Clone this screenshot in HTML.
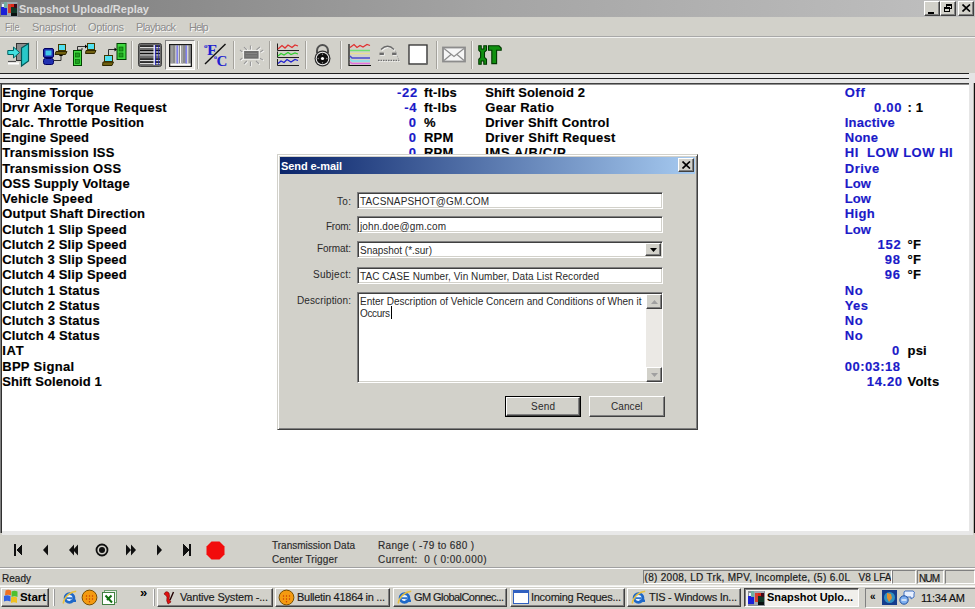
<!DOCTYPE html>
<html><head><meta charset="utf-8"><style>
html,body{margin:0;padding:0;}
body{width:975px;height:609px;overflow:hidden;position:relative;background:#D2D1CA;font-family:'Liberation Sans', sans-serif;}
div{box-sizing:border-box;}
</style></head><body>
<div style="position:absolute;left:0px;top:0px;width:975px;height:17px;background:linear-gradient(90deg,#7c7c7c 0%,#a4a4a4 50%,#c0c0c0 100%);"></div>
<div style="position:absolute;left:19.00px;top:9.19px;height:0;line-height:0;font-size:11px;white-space:pre;color:#DCDCDC;font-weight:bold;letter-spacing:0.020px;">Snapshot Upload/Replay</div>
<svg style="position:absolute;left:0px;top:0px" width="18" height="17" viewBox="0 0 18 17" shape-rendering="crispEdges"><rect x="1" y="2" width="17" height="15" fill="#8a9098"/><rect x="1" y="7" width="6" height="8" fill="#1a20d8"/><rect x="2" y="4" width="3" height="3" fill="#e8f0ff"/><rect x="4" y="2" width="3" height="6" fill="#70b0a0"/><rect x="7" y="2" width="10" height="14" fill="#a0a8b0"/><rect x="8" y="4" width="9" height="3" fill="#e02818"/><rect x="8" y="4" width="3" height="9" fill="#d84030"/><rect x="11" y="7" width="6" height="6" fill="#103828"/><rect x="14" y="4" width="3" height="4" fill="#400818"/><rect x="11" y="13" width="6" height="3" fill="#081010"/></svg>
<div style="position:absolute;left:924px;top:1px;width:16px;height:15px;background:#D2D1CA;border-top:1px solid #fff;border-left:1px solid #fff;border-right:1px solid #404040;border-bottom:1px solid #404040;box-shadow:inset -1px -1px 0 #808080;"><div style="position:absolute;left:3px;top:10px;width:6px;height:2px;background:#000"></div></div>
<div style="position:absolute;left:940px;top:1px;width:16px;height:15px;background:#D2D1CA;border-top:1px solid #fff;border-left:1px solid #fff;border-right:1px solid #404040;border-bottom:1px solid #404040;box-shadow:inset -1px -1px 0 #808080;"><div style="position:absolute;left:5px;top:2px;width:6px;height:5px;border:1px solid #000;border-top-width:2px"></div><div style="position:absolute;left:3px;top:5px;width:6px;height:5px;border:1px solid #000;border-top-width:2px;background:#D2D1CA"></div></div>
<div style="position:absolute;left:958px;top:1px;width:16px;height:15px;background:#D2D1CA;border-top:1px solid #fff;border-left:1px solid #fff;border-right:1px solid #404040;border-bottom:1px solid #404040;box-shadow:inset -1px -1px 0 #808080;"><svg style="position:absolute;left:3px;top:2px" width="9" height="8" viewBox="0 0 9 8"><path d="M0.5 0.5L8 7.5M8 0.5L0.5 7.5" stroke="#000" stroke-width="1.7"/></svg></div>
<div style="position:absolute;left:5.00px;top:27.19px;height:0;line-height:0;font-size:11px;white-space:pre;color:#8c8c8c;text-shadow:1px 1px 0 #f8f8f8;transform:scaleX(0.82);transform-origin:0 0;">File</div>
<div style="position:absolute;left:32.00px;top:27.19px;height:0;line-height:0;font-size:11px;white-space:pre;color:#8c8c8c;letter-spacing:-0.355px;text-shadow:1px 1px 0 #f8f8f8;">Snapshot</div>
<div style="position:absolute;left:88.00px;top:27.19px;height:0;line-height:0;font-size:11px;white-space:pre;color:#8c8c8c;letter-spacing:-0.320px;text-shadow:1px 1px 0 #f8f8f8;">Options</div>
<div style="position:absolute;left:136.00px;top:27.19px;height:0;line-height:0;font-size:11px;white-space:pre;color:#8c8c8c;letter-spacing:-0.663px;text-shadow:1px 1px 0 #f8f8f8;">Playback</div>
<div style="position:absolute;left:189.00px;top:27.19px;height:0;line-height:0;font-size:11px;white-space:pre;color:#8c8c8c;letter-spacing:-1.042px;text-shadow:1px 1px 0 #f8f8f8;">Help</div>
<div style="position:absolute;left:0px;top:36px;width:975px;height:1px;background:#a8a8a8"></div>
<div style="position:absolute;left:0px;top:37px;width:975px;height:1px;background:#f2f2f0"></div>
<div style="position:absolute;left:0px;top:73px;width:970px;height:1px;background:#202020"></div>
<div style="position:absolute;left:0px;top:74px;width:970px;height:4px;background:#ececec"></div>
<div style="position:absolute;left:0px;top:78px;width:970px;height:1px;background:#202020"></div>
<div style="position:absolute;left:0px;top:79px;width:970px;height:4px;background:#e6e6e6"></div>
<div style="position:absolute;left:0px;top:83px;width:970px;height:1px;background:#404040"></div>
<div style="position:absolute;left:0px;top:84px;width:970px;height:1px;background:#909090"></div>
<div style="position:absolute;left:0px;top:84px;width:1px;height:449px;background:#808080"></div>
<div style="position:absolute;left:1px;top:84px;width:1px;height:449px;background:#303030"></div>
<div style="position:absolute;left:2px;top:85px;width:967px;height:446px;background:#ffffff"></div>
<div style="position:absolute;left:969px;top:73px;width:6px;height:10px;background:#e4e4e4"></div>
<div style="position:absolute;left:969px;top:83px;width:4px;height:452px;background:#e6e6e6"></div>
<div style="position:absolute;left:973px;top:83px;width:1px;height:450px;background:#b8b8b0"></div>
<div style="position:absolute;left:974px;top:83px;width:1px;height:450px;background:#101010"></div>
<div style="position:absolute;left:2px;top:531px;width:967px;height:4px;background:#e8e8e8"></div>
<div style="position:absolute;left:2.20px;top:92.50px;height:0;line-height:0;font-size:13px;white-space:pre;color:#000;font-weight:bold;letter-spacing:0.104px;-webkit-text-stroke:0.15px currentColor;">Engine Torque</div>
<div style="position:absolute;left:397.10px;top:92.50px;height:0;line-height:0;font-size:13px;white-space:pre;color:#1a1ac8;font-weight:bold;letter-spacing:0.7px;-webkit-text-stroke:0.15px currentColor;">-22</div>
<div style="position:absolute;left:424.00px;top:92.50px;height:0;line-height:0;font-size:13px;white-space:pre;color:#000;font-weight:bold;letter-spacing:0.2px;-webkit-text-stroke:0.15px currentColor;">ft-lbs</div>
<div style="position:absolute;left:485.20px;top:92.50px;height:0;line-height:0;font-size:13px;white-space:pre;color:#000;font-weight:bold;letter-spacing:0.098px;-webkit-text-stroke:0.15px currentColor;">Shift Solenoid 2</div>
<div style="position:absolute;left:844.80px;top:92.50px;height:0;line-height:0;font-size:13px;white-space:pre;color:#1a1ac8;font-weight:bold;letter-spacing:0.659px;-webkit-text-stroke:0.15px currentColor;">Off</div>
<div style="position:absolute;left:2.20px;top:107.50px;height:0;line-height:0;font-size:13px;white-space:pre;color:#000;font-weight:bold;letter-spacing:0.242px;-webkit-text-stroke:0.15px currentColor;">Drvr Axle Torque Request</div>
<div style="position:absolute;left:404.34px;top:107.50px;height:0;line-height:0;font-size:13px;white-space:pre;color:#1a1ac8;font-weight:bold;letter-spacing:0.7px;-webkit-text-stroke:0.15px currentColor;">-4</div>
<div style="position:absolute;left:424.00px;top:107.50px;height:0;line-height:0;font-size:13px;white-space:pre;color:#000;font-weight:bold;letter-spacing:0.2px;-webkit-text-stroke:0.15px currentColor;">ft-lbs</div>
<div style="position:absolute;left:485.20px;top:107.50px;height:0;line-height:0;font-size:13px;white-space:pre;color:#000;font-weight:bold;letter-spacing:0.339px;-webkit-text-stroke:0.15px currentColor;">Gear Ratio</div>
<div style="position:absolute;left:873.99px;top:107.50px;height:0;line-height:0;font-size:13px;white-space:pre;color:#1a1ac8;font-weight:bold;letter-spacing:0.7px;-webkit-text-stroke:0.15px currentColor;">0.00</div>
<div style="position:absolute;left:907.50px;top:107.50px;height:0;line-height:0;font-size:13px;white-space:pre;color:#000;font-weight:bold;letter-spacing:0.2px;-webkit-text-stroke:0.15px currentColor;">: 1</div>
<div style="position:absolute;left:2.20px;top:122.50px;height:0;line-height:0;font-size:13px;white-space:pre;color:#000;font-weight:bold;letter-spacing:0.174px;-webkit-text-stroke:0.15px currentColor;">Calc. Throttle Position</div>
<div style="position:absolute;left:408.67px;top:122.50px;height:0;line-height:0;font-size:13px;white-space:pre;color:#1a1ac8;font-weight:bold;letter-spacing:0.7px;-webkit-text-stroke:0.15px currentColor;">0</div>
<div style="position:absolute;left:424.00px;top:122.50px;height:0;line-height:0;font-size:13px;white-space:pre;color:#000;font-weight:bold;letter-spacing:0.2px;-webkit-text-stroke:0.15px currentColor;">%</div>
<div style="position:absolute;left:485.20px;top:122.50px;height:0;line-height:0;font-size:13px;white-space:pre;color:#000;font-weight:bold;letter-spacing:0.221px;-webkit-text-stroke:0.15px currentColor;">Driver Shift Control</div>
<div style="position:absolute;left:844.80px;top:122.50px;height:0;line-height:0;font-size:13px;white-space:pre;color:#1a1ac8;font-weight:bold;letter-spacing:0.211px;-webkit-text-stroke:0.15px currentColor;">Inactive</div>
<div style="position:absolute;left:2.20px;top:137.50px;height:0;line-height:0;font-size:13px;white-space:pre;color:#000;font-weight:bold;letter-spacing:0.076px;-webkit-text-stroke:0.15px currentColor;">Engine Speed</div>
<div style="position:absolute;left:408.67px;top:137.50px;height:0;line-height:0;font-size:13px;white-space:pre;color:#1a1ac8;font-weight:bold;letter-spacing:0.7px;-webkit-text-stroke:0.15px currentColor;">0</div>
<div style="position:absolute;left:424.00px;top:137.50px;height:0;line-height:0;font-size:13px;white-space:pre;color:#000;font-weight:bold;letter-spacing:0.2px;-webkit-text-stroke:0.15px currentColor;">RPM</div>
<div style="position:absolute;left:485.20px;top:137.50px;height:0;line-height:0;font-size:13px;white-space:pre;color:#000;font-weight:bold;letter-spacing:0.275px;-webkit-text-stroke:0.15px currentColor;">Driver Shift Request</div>
<div style="position:absolute;left:844.80px;top:137.50px;height:0;line-height:0;font-size:13px;white-space:pre;color:#1a1ac8;font-weight:bold;letter-spacing:0.233px;-webkit-text-stroke:0.15px currentColor;">None</div>
<div style="position:absolute;left:2.20px;top:152.50px;height:0;line-height:0;font-size:13px;white-space:pre;color:#000;font-weight:bold;letter-spacing:0.255px;-webkit-text-stroke:0.15px currentColor;">Transmission ISS</div>
<div style="position:absolute;left:408.67px;top:152.50px;height:0;line-height:0;font-size:13px;white-space:pre;color:#1a1ac8;font-weight:bold;letter-spacing:0.7px;-webkit-text-stroke:0.15px currentColor;">0</div>
<div style="position:absolute;left:424.00px;top:152.50px;height:0;line-height:0;font-size:13px;white-space:pre;color:#000;font-weight:bold;letter-spacing:0.2px;-webkit-text-stroke:0.15px currentColor;">RPM</div>
<div style="position:absolute;left:485.20px;top:152.50px;height:0;line-height:0;font-size:13px;white-space:pre;color:#000;font-weight:bold;letter-spacing:0.658px;-webkit-text-stroke:0.15px currentColor;">IMS A/B/C/P</div>
<div style="position:absolute;left:844.80px;top:152.50px;height:0;line-height:0;font-size:13px;white-space:pre;color:#1a1ac8;font-weight:bold;letter-spacing:0.524px;-webkit-text-stroke:0.15px currentColor;">HI  LOW LOW HI</div>
<div style="position:absolute;left:2.20px;top:168.50px;height:0;line-height:0;font-size:13px;white-space:pre;color:#000;font-weight:bold;letter-spacing:0.268px;-webkit-text-stroke:0.15px currentColor;">Transmission OSS</div>
<div style="position:absolute;left:844.80px;top:168.50px;height:0;line-height:0;font-size:13px;white-space:pre;color:#1a1ac8;font-weight:bold;letter-spacing:0.467px;-webkit-text-stroke:0.15px currentColor;">Drive</div>
<div style="position:absolute;left:2.20px;top:183.50px;height:0;line-height:0;font-size:13px;white-space:pre;color:#000;font-weight:bold;letter-spacing:0.205px;-webkit-text-stroke:0.15px currentColor;">OSS Supply Voltage</div>
<div style="position:absolute;left:844.80px;top:183.50px;height:0;line-height:0;font-size:13px;white-space:pre;color:#1a1ac8;font-weight:bold;letter-spacing:0.050px;-webkit-text-stroke:0.15px currentColor;">Low</div>
<div style="position:absolute;left:2.20px;top:198.50px;height:0;line-height:0;font-size:13px;white-space:pre;color:#000;font-weight:bold;letter-spacing:0.255px;-webkit-text-stroke:0.15px currentColor;">Vehicle Speed</div>
<div style="position:absolute;left:844.80px;top:198.50px;height:0;line-height:0;font-size:13px;white-space:pre;color:#1a1ac8;font-weight:bold;letter-spacing:0.050px;-webkit-text-stroke:0.15px currentColor;">Low</div>
<div style="position:absolute;left:2.20px;top:213.50px;height:0;line-height:0;font-size:13px;white-space:pre;color:#000;font-weight:bold;letter-spacing:0.197px;-webkit-text-stroke:0.15px currentColor;">Output Shaft Direction</div>
<div style="position:absolute;left:844.80px;top:213.50px;height:0;line-height:0;font-size:13px;white-space:pre;color:#1a1ac8;font-weight:bold;letter-spacing:0.336px;-webkit-text-stroke:0.15px currentColor;">High</div>
<div style="position:absolute;left:2.20px;top:229.50px;height:0;line-height:0;font-size:13px;white-space:pre;color:#000;font-weight:bold;letter-spacing:0.174px;-webkit-text-stroke:0.15px currentColor;">Clutch 1 Slip Speed</div>
<div style="position:absolute;left:844.80px;top:229.50px;height:0;line-height:0;font-size:13px;white-space:pre;color:#1a1ac8;font-weight:bold;letter-spacing:0.050px;-webkit-text-stroke:0.15px currentColor;">Low</div>
<div style="position:absolute;left:2.20px;top:244.50px;height:0;line-height:0;font-size:13px;white-space:pre;color:#000;font-weight:bold;letter-spacing:0.174px;-webkit-text-stroke:0.15px currentColor;">Clutch 2 Slip Speed</div>
<div style="position:absolute;left:877.60px;top:244.50px;height:0;line-height:0;font-size:13px;white-space:pre;color:#1a1ac8;font-weight:bold;letter-spacing:0.7px;-webkit-text-stroke:0.15px currentColor;">152</div>
<div style="position:absolute;left:907.50px;top:244.50px;height:0;line-height:0;font-size:13px;white-space:pre;color:#000;font-weight:bold;letter-spacing:0.2px;-webkit-text-stroke:0.15px currentColor;">°F</div>
<div style="position:absolute;left:2.20px;top:259.50px;height:0;line-height:0;font-size:13px;white-space:pre;color:#000;font-weight:bold;letter-spacing:0.174px;-webkit-text-stroke:0.15px currentColor;">Clutch 3 Slip Speed</div>
<div style="position:absolute;left:884.83px;top:259.50px;height:0;line-height:0;font-size:13px;white-space:pre;color:#1a1ac8;font-weight:bold;letter-spacing:0.7px;-webkit-text-stroke:0.15px currentColor;">98</div>
<div style="position:absolute;left:907.50px;top:259.50px;height:0;line-height:0;font-size:13px;white-space:pre;color:#000;font-weight:bold;letter-spacing:0.2px;-webkit-text-stroke:0.15px currentColor;">°F</div>
<div style="position:absolute;left:2.20px;top:274.50px;height:0;line-height:0;font-size:13px;white-space:pre;color:#000;font-weight:bold;letter-spacing:0.174px;-webkit-text-stroke:0.15px currentColor;">Clutch 4 Slip Speed</div>
<div style="position:absolute;left:884.83px;top:274.50px;height:0;line-height:0;font-size:13px;white-space:pre;color:#1a1ac8;font-weight:bold;letter-spacing:0.7px;-webkit-text-stroke:0.15px currentColor;">96</div>
<div style="position:absolute;left:907.50px;top:274.50px;height:0;line-height:0;font-size:13px;white-space:pre;color:#000;font-weight:bold;letter-spacing:0.2px;-webkit-text-stroke:0.15px currentColor;">°F</div>
<div style="position:absolute;left:2.20px;top:290.50px;height:0;line-height:0;font-size:13px;white-space:pre;color:#000;font-weight:bold;letter-spacing:0.205px;-webkit-text-stroke:0.15px currentColor;">Clutch 1 Status</div>
<div style="position:absolute;left:844.80px;top:290.50px;height:0;line-height:0;font-size:13px;white-space:pre;color:#1a1ac8;font-weight:bold;letter-spacing:0.456px;-webkit-text-stroke:0.15px currentColor;">No</div>
<div style="position:absolute;left:2.20px;top:305.50px;height:0;line-height:0;font-size:13px;white-space:pre;color:#000;font-weight:bold;letter-spacing:0.205px;-webkit-text-stroke:0.15px currentColor;">Clutch 2 Status</div>
<div style="position:absolute;left:844.80px;top:305.50px;height:0;line-height:0;font-size:13px;white-space:pre;color:#1a1ac8;font-weight:bold;letter-spacing:0.339px;-webkit-text-stroke:0.15px currentColor;">Yes</div>
<div style="position:absolute;left:2.20px;top:320.50px;height:0;line-height:0;font-size:13px;white-space:pre;color:#000;font-weight:bold;letter-spacing:0.205px;-webkit-text-stroke:0.15px currentColor;">Clutch 3 Status</div>
<div style="position:absolute;left:844.80px;top:320.50px;height:0;line-height:0;font-size:13px;white-space:pre;color:#1a1ac8;font-weight:bold;letter-spacing:0.456px;-webkit-text-stroke:0.15px currentColor;">No</div>
<div style="position:absolute;left:2.20px;top:335.50px;height:0;line-height:0;font-size:13px;white-space:pre;color:#000;font-weight:bold;letter-spacing:0.205px;-webkit-text-stroke:0.15px currentColor;">Clutch 4 Status</div>
<div style="position:absolute;left:844.80px;top:335.50px;height:0;line-height:0;font-size:13px;white-space:pre;color:#1a1ac8;font-weight:bold;letter-spacing:0.456px;-webkit-text-stroke:0.15px currentColor;">No</div>
<div style="position:absolute;left:2.20px;top:350.50px;height:0;line-height:0;font-size:13px;white-space:pre;color:#000;font-weight:bold;letter-spacing:0.758px;-webkit-text-stroke:0.15px currentColor;">IAT</div>
<div style="position:absolute;left:892.07px;top:350.50px;height:0;line-height:0;font-size:13px;white-space:pre;color:#1a1ac8;font-weight:bold;letter-spacing:0.7px;-webkit-text-stroke:0.15px currentColor;">0</div>
<div style="position:absolute;left:907.50px;top:350.50px;height:0;line-height:0;font-size:13px;white-space:pre;color:#000;font-weight:bold;letter-spacing:0.2px;-webkit-text-stroke:0.15px currentColor;">psi</div>
<div style="position:absolute;left:2.20px;top:366.50px;height:0;line-height:0;font-size:13px;white-space:pre;color:#000;font-weight:bold;letter-spacing:0.308px;-webkit-text-stroke:0.15px currentColor;">BPP Signal</div>
<div style="position:absolute;left:844.80px;top:366.50px;height:0;line-height:0;font-size:13px;white-space:pre;color:#1a1ac8;font-weight:bold;letter-spacing:0.436px;-webkit-text-stroke:0.15px currentColor;">00:03:18</div>
<div style="position:absolute;left:2.20px;top:381.50px;height:0;line-height:0;font-size:13px;white-space:pre;color:#000;font-weight:bold;letter-spacing:0.084px;-webkit-text-stroke:0.15px currentColor;">Shift Solenoid 1</div>
<div style="position:absolute;left:866.75px;top:381.50px;height:0;line-height:0;font-size:13px;white-space:pre;color:#1a1ac8;font-weight:bold;letter-spacing:0.7px;-webkit-text-stroke:0.15px currentColor;">14.20</div>
<div style="position:absolute;left:907.50px;top:381.50px;height:0;line-height:0;font-size:13px;white-space:pre;color:#000;font-weight:bold;letter-spacing:0.2px;-webkit-text-stroke:0.15px currentColor;">Volts</div>
<div style="position:absolute;left:0px;top:567px;width:975px;height:1px;background:#a0a0a0"></div>
<div style="position:absolute;left:0px;top:568px;width:975px;height:1px;background:#ffffff"></div>
<div style="position:absolute;left:0;top:0;width:975px;height:567px;overflow:hidden">
<div style="position:absolute;left:272.00px;top:545.53px;height:0;line-height:0;font-size:10px;white-space:pre;color:#2a2a2a;-webkit-text-stroke:0.15px currentColor;">Transmission Data</div>
<div style="position:absolute;left:272.00px;top:559.53px;height:0;line-height:0;font-size:10px;white-space:pre;color:#2a2a2a;letter-spacing:0.121px;-webkit-text-stroke:0.15px currentColor;">Center Trigger</div>
<div style="position:absolute;left:378.00px;top:545.53px;height:0;line-height:0;font-size:10px;white-space:pre;color:#2a2a2a;letter-spacing:0.342px;-webkit-text-stroke:0.15px currentColor;">Range ( -79 to 680 )</div>
<div style="position:absolute;left:378.00px;top:559.53px;height:0;line-height:0;font-size:10px;white-space:pre;color:#2a2a2a;letter-spacing:0.460px;-webkit-text-stroke:0.15px currentColor;">Current:  0 ( 0:00.000)</div>
</div>
<div style="position:absolute;left:2.00px;top:578.53px;height:0;line-height:0;font-size:10px;white-space:pre;color:#1e1e1e;letter-spacing:0.023px;-webkit-text-stroke:0.2px currentColor;">Ready</div>
<div style="position:absolute;left:643px;top:570px;width:249px;height:14px;border-top:1px solid #808080;border-left:1px solid #808080;border-right:1px solid #fff;border-bottom:1px solid #fff;"></div>
<div style="position:absolute;left:892px;top:570px;width:24px;height:14px;border-top:1px solid #808080;border-left:1px solid #808080;border-right:1px solid #fff;border-bottom:1px solid #fff;"></div>
<div style="position:absolute;left:917px;top:570px;width:27px;height:14px;border-top:1px solid #808080;border-left:1px solid #808080;border-right:1px solid #fff;border-bottom:1px solid #fff;"></div>
<div style="position:absolute;left:945px;top:570px;width:30px;height:14px;border-top:1px solid #808080;border-left:1px solid #808080;border-right:1px solid #fff;border-bottom:1px solid #fff;"></div>
<div style="position:absolute;left:644px;top:571px;width:247px;height:13px;overflow:hidden">
<div style="position:absolute;left:0.50px;top:6.54px;height:0;line-height:0;font-size:10px;white-space:pre;color:#1a1a1a;letter-spacing:0.296px;-webkit-text-stroke:0.2px currentColor;">(8) 2008, LD Trk, MPV, Incomplete, (5) 6.0L</div>
<div style="position:absolute;left:214.50px;top:6.54px;height:0;line-height:0;font-size:10px;white-space:pre;color:#1a1a1a;letter-spacing:0.037px;-webkit-text-stroke:0.2px currentColor;">V8 LFA</div>
</div>
<div style="position:absolute;left:919.00px;top:578.53px;height:0;line-height:0;font-size:10px;white-space:pre;color:#1a1a1a;letter-spacing:-0.891px;-webkit-text-stroke:0.2px currentColor;">NUM</div>
<div style="position:absolute;left:0px;top:585px;width:975px;height:1px;background:#eeeeea"></div>
<div style="position:absolute;left:0px;top:586px;width:975px;height:1px;background:#fcfcfc"></div>
<div style="position:absolute;left:277px;top:154px;width:421px;height:276px;background:#D2D1CA;border-top:1px solid #D2D1CA;border-left:1px solid #D2D1CA;border-right:1px solid #404040;border-bottom:1px solid #404040;box-shadow:inset 1px 1px 0 #fff,inset -1px -1px 0 #808080;"></div>
<div style="position:absolute;left:280px;top:157px;width:415px;height:17px;background:linear-gradient(90deg,#0a246a 0%,#a6caf0 100%);"></div>
<div style="position:absolute;left:281.00px;top:166.19px;height:0;line-height:0;font-size:11px;white-space:pre;color:#ffffff;font-weight:bold;letter-spacing:-0.075px;">Send e-mail</div>
<div style="position:absolute;left:678px;top:158px;width:16px;height:14px;background:#D2D1CA;border-top:1px solid #fff;border-left:1px solid #fff;border-right:1px solid #404040;border-bottom:1px solid #404040;box-shadow:inset -1px -1px 0 #808080;"><svg style="position:absolute;left:3px;top:2px" width="9" height="8" viewBox="0 0 9 8"><path d="M0.5 0.5L8 7.5M8 0.5L0.5 7.5" stroke="#000" stroke-width="1.7"/></svg></div>
<div style="position:absolute;left:357px;top:192px;width:306px;height:17px;background:#fff;border-top:1px solid #808080;border-left:1px solid #808080;border-right:1px solid #fff;border-bottom:1px solid #fff;box-shadow:inset 1px 1px 0 #404040,inset -1px -1px 0 #D2D1CA;"></div>
<div style="position:absolute;left:357px;top:216px;width:306px;height:17px;background:#fff;border-top:1px solid #808080;border-left:1px solid #808080;border-right:1px solid #fff;border-bottom:1px solid #fff;box-shadow:inset 1px 1px 0 #404040,inset -1px -1px 0 #D2D1CA;"></div>
<div style="position:absolute;left:357px;top:241px;width:306px;height:17px;background:#fff;border-top:1px solid #808080;border-left:1px solid #808080;border-right:1px solid #fff;border-bottom:1px solid #fff;box-shadow:inset 1px 1px 0 #404040,inset -1px -1px 0 #D2D1CA;"></div>
<div style="position:absolute;left:357px;top:267px;width:306px;height:17px;background:#fff;border-top:1px solid #808080;border-left:1px solid #808080;border-right:1px solid #fff;border-bottom:1px solid #fff;box-shadow:inset 1px 1px 0 #404040,inset -1px -1px 0 #D2D1CA;"></div>
<div style="position:absolute;left:357px;top:292px;width:306px;height:91px;background:#fff;border-top:1px solid #808080;border-left:1px solid #808080;border-right:1px solid #fff;border-bottom:1px solid #fff;box-shadow:inset 1px 1px 0 #404040,inset -1px -1px 0 #D2D1CA;"></div>
<div style="position:absolute;left:337.00px;top:201.53px;height:0;line-height:0;font-size:10px;white-space:pre;color:#2a2a2a;letter-spacing:0.328px;">To:</div>
<div style="position:absolute;left:326.00px;top:226.53px;height:0;line-height:0;font-size:10px;white-space:pre;color:#2a2a2a;letter-spacing:-0.277px;">From:</div>
<div style="position:absolute;left:317.00px;top:248.53px;height:0;line-height:0;font-size:10px;white-space:pre;color:#2a2a2a;letter-spacing:-0.076px;">Format:</div>
<div style="position:absolute;left:313.00px;top:274.54px;height:0;line-height:0;font-size:10px;white-space:pre;color:#2a2a2a;letter-spacing:0.266px;">Subject:</div>
<div style="position:absolute;left:297.00px;top:300.54px;height:0;line-height:0;font-size:10px;white-space:pre;color:#2a2a2a;letter-spacing:0.108px;">Description:</div>
<div style="position:absolute;left:360.00px;top:201.53px;height:0;line-height:0;font-size:10px;white-space:pre;color:#2a2a2a;letter-spacing:0.139px;">TACSNAPSHOT@GM.COM</div>
<div style="position:absolute;left:360.00px;top:226.53px;height:0;line-height:0;font-size:10px;white-space:pre;color:#2a2a2a;letter-spacing:0.136px;">john.doe@gm.com</div>
<div style="position:absolute;left:360.00px;top:250.53px;height:0;line-height:0;font-size:10px;white-space:pre;color:#2a2a2a;letter-spacing:-0.018px;">Snapshot (*.sur)</div>
<div style="position:absolute;left:360.00px;top:276.54px;height:0;line-height:0;font-size:10px;white-space:pre;color:#2a2a2a;letter-spacing:0.069px;">TAC CASE Number, Vin Number, Data List Recorded</div>
<div style="position:absolute;left:360.00px;top:301.54px;height:0;line-height:0;font-size:10px;white-space:pre;color:#2a2a2a;letter-spacing:0.013px;">Enter Description of Vehicle Concern and Conditions of When it</div>
<div style="position:absolute;left:360.00px;top:313.54px;height:0;line-height:0;font-size:10px;white-space:pre;color:#2a2a2a;letter-spacing:-0.334px;">Occurs</div>
<div style="position:absolute;left:391px;top:306px;width:1px;height:13px;background:#000"></div>
<div style="position:absolute;left:645px;top:243px;width:16px;height:13px;background:#D2D1CA;border-top:1px solid #fff;border-left:1px solid #fff;border-right:1px solid #404040;border-bottom:1px solid #404040;box-shadow:inset -1px -1px 0 #808080;"><svg style="position:absolute;left:4px;top:4px" width="7" height="4" viewBox="0 0 7 4"><path d="M0 0H7L3.5 4Z" fill="#000"/></svg></div>
<div style="position:absolute;left:646px;top:294px;width:16px;height:88px;background:#ebe9e5"></div>
<div style="position:absolute;left:646px;top:294px;width:16px;height:15px;background:#D2D1CA;border-top:1px solid #fff;border-left:1px solid #fff;border-right:1px solid #404040;border-bottom:1px solid #404040;box-shadow:inset -1px -1px 0 #808080;"><svg style="position:absolute;left:4px;top:5px" width="7" height="4" viewBox="0 0 7 4"><path d="M3.5 0L7 4H0Z" fill="#a0a0a0"/></svg></div>
<div style="position:absolute;left:646px;top:367px;width:16px;height:15px;background:#D2D1CA;border-top:1px solid #fff;border-left:1px solid #fff;border-right:1px solid #404040;border-bottom:1px solid #404040;box-shadow:inset -1px -1px 0 #808080;"><svg style="position:absolute;left:4px;top:5px" width="7" height="4" viewBox="0 0 7 4"><path d="M0 0H7L3.5 4Z" fill="#a0a0a0"/></svg></div>
<div style="position:absolute;left:505px;top:396px;width:76px;height:21px;border:1px solid #000;background:#D2D1CA;"><div style="position:absolute;left:0;top:0;right:0;bottom:0;border-top:1px solid #fff;border-left:1px solid #fff;border-right:1px solid #404040;border-bottom:1px solid #404040;box-shadow:inset -1px -1px 0 #808080"></div></div>
<div style="position:absolute;left:589px;top:396px;width:76px;height:21px;background:#D2D1CA;border-top:1px solid #fff;border-left:1px solid #fff;border-right:1px solid #404040;border-bottom:1px solid #404040;box-shadow:inset -1px -1px 0 #808080;"></div>
<div style="position:absolute;left:531.00px;top:406.54px;height:0;line-height:0;font-size:10px;white-space:pre;color:#2a2a2a;letter-spacing:0.214px;">Send</div>
<div style="position:absolute;left:611.00px;top:406.54px;height:0;line-height:0;font-size:10px;white-space:pre;color:#2a2a2a;letter-spacing:0.072px;">Cancel</div>
<div style="position:absolute;left:36px;top:41px;width:1px;height:28px;background:#a4a29c"></div>
<div style="position:absolute;left:37px;top:41px;width:1px;height:28px;background:#f2f2f0"></div>
<div style="position:absolute;left:131px;top:41px;width:1px;height:28px;background:#a4a29c"></div>
<div style="position:absolute;left:132px;top:41px;width:1px;height:28px;background:#f2f2f0"></div>
<div style="position:absolute;left:197px;top:41px;width:1px;height:28px;background:#a4a29c"></div>
<div style="position:absolute;left:198px;top:41px;width:1px;height:28px;background:#f2f2f0"></div>
<div style="position:absolute;left:233px;top:41px;width:1px;height:28px;background:#a4a29c"></div>
<div style="position:absolute;left:234px;top:41px;width:1px;height:28px;background:#f2f2f0"></div>
<div style="position:absolute;left:269px;top:41px;width:1px;height:28px;background:#a4a29c"></div>
<div style="position:absolute;left:270px;top:41px;width:1px;height:28px;background:#f2f2f0"></div>
<div style="position:absolute;left:305px;top:41px;width:1px;height:28px;background:#a4a29c"></div>
<div style="position:absolute;left:306px;top:41px;width:1px;height:28px;background:#f2f2f0"></div>
<div style="position:absolute;left:340px;top:41px;width:1px;height:28px;background:#a4a29c"></div>
<div style="position:absolute;left:341px;top:41px;width:1px;height:28px;background:#f2f2f0"></div>
<div style="position:absolute;left:436px;top:41px;width:1px;height:28px;background:#a4a29c"></div>
<div style="position:absolute;left:437px;top:41px;width:1px;height:28px;background:#f2f2f0"></div>
<div style="position:absolute;left:471px;top:41px;width:1px;height:28px;background:#a4a29c"></div>
<div style="position:absolute;left:472px;top:41px;width:1px;height:28px;background:#f2f2f0"></div>
<svg style="position:absolute;left:7px;top:42px" width="24" height="26" viewBox="0 0 24 26"><rect x="9.5" y="1.5" width="12" height="17" fill="#8c8c8c" stroke="#303030"/><path d="M1 19.5H9" stroke="#505050" stroke-width="1.2"/><path d="M1 21.5H12" stroke="#ffffff" stroke-width="2"/><path d="M14.5 6L21.5 1.5V19L14.5 24Z" fill="#28c8c8" stroke="#005858" stroke-width="1.2"/><path d="M0.8 8.5H6.5V5L12.5 10.5L6.5 16V12.5H0.8Z" fill="#40e0e0" stroke="#006060" stroke-width="1"/></svg>
<svg style="position:absolute;left:42px;top:43px" width="26" height="25" viewBox="0 0 26 25"><rect x="1.5" y="5.5" width="10" height="9" rx="1.5" fill="#2030b0" stroke="#000060"/><rect x="3.5" y="7.5" width="6" height="5" fill="#40c8e8"/><rect x="1.5" y="15.5" width="10" height="6" rx="2" fill="#2030b0" stroke="#000060"/><path d="M12 17.5H19V12" stroke="#303030" fill="none"/><path d="M17 13L19 10L21 13Z" fill="#000"/><rect x="16.5" y="1.5" width="7" height="6" fill="#50e0f0" stroke="#403800"/><path d="M14 8.5H25L23.5 11.5H13Z" fill="#706010" stroke="#302800"/></svg>
<svg style="position:absolute;left:72px;top:42px" width="26" height="26" viewBox="0 0 26 26"><path d="M5.5 8L10 8V6" stroke="#303030" fill="none"/><path d="M5.5 8V4.5H13" stroke="#303030" fill="none"/><path d="M13 2.5L15.5 4.5L13 6.5Z" fill="#000"/><rect x="1.5" y="8.5" width="8" height="15" fill="#40d840" stroke="#004000"/><rect x="3.5" y="11" width="4" height="4" fill="#20a020" stroke="#006000" stroke-width="0.6"/><rect x="3.5" y="17.5" width="4" height="4" fill="#20a020" stroke="#006000" stroke-width="0.6"/><rect x="15.5" y="1.5" width="7" height="6" fill="#50e0f0" stroke="#403800"/><path d="M14 8.5H24L22.5 11.5H13.5Z" fill="#706010" stroke="#302800"/></svg>
<svg style="position:absolute;left:102px;top:42px" width="26" height="26" viewBox="0 0 26 26"><path d="M6.5 13V7.5H13" stroke="#303030" fill="none"/><path d="M12.5 5.5L15 7.5L12.5 9.5Z" fill="#000"/><rect x="2.5" y="13.5" width="8" height="6" fill="#50e0f0" stroke="#403800"/><path d="M1 20H11.5L10 23.5H0.5Z" fill="#706010" stroke="#302800"/><rect x="15" y="1.5" width="9" height="16" fill="#40d840" stroke="#004000"/><rect x="17" y="5" width="4" height="4" fill="#20a020" stroke="#006000" stroke-width="0.6"/><rect x="17" y="11" width="4" height="4" fill="#20a020" stroke="#006000" stroke-width="0.6"/></svg>
<svg style="position:absolute;left:138px;top:43px" width="24" height="24" viewBox="0 0 24 24"><rect x="0.5" y="0.5" width="23" height="23" rx="2" fill="#6c6c6c" stroke="#404040"/><rect x="2" y="2.5" width="20" height="1.2" fill="#101010"/><rect x="2" y="4" width="20" height="0.9" fill="#e8e8e8"/><rect x="2" y="7" width="20" height="1.2" fill="#101010"/><rect x="2" y="8.5" width="20" height="0.9" fill="#e8e8e8"/><rect x="2" y="10" width="20" height="1.2" fill="#101010"/><rect x="2" y="11.5" width="20" height="0.9" fill="#e8e8e8"/><rect x="2" y="15.5" width="20" height="1.2" fill="#101010"/><rect x="2" y="17" width="20" height="0.9" fill="#e8e8e8"/><rect x="2" y="18.5" width="20" height="1.2" fill="#101010"/><rect x="2" y="20" width="20" height="0.9" fill="#e8e8e8"/><rect x="15.5" y="2" width="1.4" height="20" fill="#e8e8ff"/><rect x="17" y="2" width="1.2" height="20" fill="#2020c0" opacity="0.8"/><rect x="20" y="2" width="1.2" height="20" fill="#2020c0" opacity="0.6"/></svg>
<div style="position:absolute;left:165px;top:40px;width:30px;height:30px;background:#eeece8;border-top:1px solid #808080;border-left:1px solid #808080;border-right:1px solid #fff;border-bottom:1px solid #fff"></div>
<svg style="position:absolute;left:169px;top:44px" width="23" height="23" viewBox="0 0 23 23"><rect x="0.5" y="0.5" width="22" height="22" fill="#8a8a8a" stroke="#181818" stroke-width="1.2"/><rect x="1.5" y="19.5" width="20" height="2.2" fill="#fff"/><rect x="2.5" y="1.5" width="1" height="18" fill="#b0b0b0"/><rect x="6.5" y="1.5" width="1" height="18" fill="#f8f8f8"/><rect x="7.5" y="1.5" width="1.5" height="18" fill="#8080f0"/><rect x="9" y="1.5" width="0.8" height="18" fill="#e0e0f0"/><rect x="11" y="1.5" width="1.2" height="18" fill="#f8f8f8"/><rect x="13" y="1.5" width="1" height="18" fill="#a8a8a8"/><rect x="16.5" y="1.5" width="1.5" height="18" fill="#8080f0"/><rect x="18.3" y="1.5" width="1" height="18" fill="#f8f8f8"/></svg>
<svg style="position:absolute;left:203px;top:43px" width="26" height="24" viewBox="0 0 26 24"><text x="1" y="5" font-family="Liberation Serif" font-weight="bold" font-size="7" fill="#2020d0">o</text><text x="4" y="11.5" font-family="Liberation Serif" font-weight="bold" font-size="15" fill="#2020d0" textLength="10" lengthAdjust="spacingAndGlyphs">F</text><path d="M2 21L22.5 1" stroke="#101010" stroke-width="1.4"/><text x="11" y="15.5" font-family="Liberation Serif" font-weight="bold" font-size="6" fill="#2020d0">o</text><text x="13.5" y="23" font-family="Liberation Serif" font-weight="bold" font-size="15" fill="#2020d0">C</text></svg>
<svg style="position:absolute;left:238px;top:44px" width="27" height="23" viewBox="0 0 27 23"><rect x="5" y="6" width="16.8" height="9.8" fill="#eeeeec"/><rect x="6.1" y="7" width="14.5" height="7.7" fill="#6e6e6e"/><path d="M7.5 9.5H19M7.5 12H19" stroke="#8a8a8a" stroke-width="0.8"/><g stroke="#f4f4f2" stroke-width="1.4" transform="translate(0.8,0.6)"><path d="M12.5 1.5V5.5M12.5 17.5V22M6 3.1L8.8 5.7M22 3L18.5 5.7M2 6L4.4 8M2 16L4.4 14M25.3 6L22.3 8M25 16L22 14.3M6 19.8L8.8 17M21 19.8L18 17"/></g><g stroke="#9a9a9a" stroke-width="1.2"><path d="M12.5 1.5V5.5M12.5 17.5V22M6 3.1L8.8 5.7M22 3L18.5 5.7M2 6L4.4 8M2 16L4.4 14M25.3 6L22.3 8M25 16L22 14.3M6 19.8L8.8 17M21 19.8L18 17"/></g></svg>
<svg style="position:absolute;left:275px;top:43px" width="25" height="24" viewBox="0 0 25 24"><g stroke="#202020" stroke-width="1" fill="none"><path d="M2.5 0.5V7.5H24M2.5 8.5V14.5H24M2.5 16V22.5H24"/></g><path d="M3 6L7 2.5L10 5L13 2L17 4.5L20 2L23 3" stroke="#e03030" stroke-width="1.3" fill="none"/><path d="M3 13L6 10.5L9 12L13 9.5L16 11.5L20 10L23 11" stroke="#30d030" stroke-width="1.3" fill="none"/><path d="M3 20.5L6 18L9 19.5L12 16.5L16 19L20 16.5L23 17.5" stroke="#2020d0" stroke-width="1.3" fill="none"/></svg>
<svg style="position:absolute;left:313px;top:44px" width="19" height="23" viewBox="0 0 19 23"><path d="M4 9V6.5A5.5 5.5 0 0 1 15 6.5V9" stroke="#505050" stroke-width="2" fill="none"/><circle cx="9.5" cy="14.5" r="8" fill="#303030"/><circle cx="9.5" cy="14.5" r="6.8" fill="#f0f0f0"/><circle cx="9.5" cy="14.5" r="5.8" fill="#101010"/><circle cx="9.5" cy="14.5" r="1.6" fill="#ffffff"/><g fill="#909090"><circle cx="9.5" cy="10.2" r="0.7"/><circle cx="9.5" cy="18.8" r="0.7"/><circle cx="5.2" cy="14.5" r="0.7"/><circle cx="13.8" cy="14.5" r="0.7"/></g></svg>
<svg style="position:absolute;left:347px;top:43px" width="25" height="24" viewBox="0 0 25 24"><path d="M2 1V22.5H24" stroke="#101010" stroke-width="1.2" fill="none"/><path d="M3 4.5L7 1.5L10 4.5L13 2.5L16 4L20 1.5L23 2.5" stroke="#e03030" stroke-width="1.3" fill="none"/><path d="M3 7.5H23" stroke="#70e070" stroke-width="1.5"/><path d="M3 10.5H23" stroke="#e8e090" stroke-width="1.3"/><path d="M3 13L5 15H23" stroke="#4848d0" stroke-width="1.5" fill="none"/><path d="M3 16L5 18H23" stroke="#80e0f0" stroke-width="1.3" fill="none"/><path d="M3 19L5 20.5H23" stroke="#e070e0" stroke-width="1.4" fill="none"/></svg>
<svg style="position:absolute;left:377px;top:45px" width="24" height="18" viewBox="0 0 24 18"><g stroke="#f6f6f4" fill="none" transform="translate(0.8,0.9)"><path d="M4 4.5Q10.6 -2 17 4.5" stroke-width="1.5"/><path d="M1 15.3H22.2" stroke-width="1.2" stroke-dasharray="1.6 0.9"/></g><path d="M4 4.5Q10.6 -2 17 4.5" stroke="#6a6a6a" stroke-width="1.4" fill="none"/><rect x="3.3" y="8.4" width="4.4" height="2.4" fill="#f4f4f2"/><rect x="15.9" y="8.4" width="4.4" height="2.4" fill="#f4f4f2"/><rect x="2.5" y="7.6" width="4.4" height="2.4" fill="#6a6a6a"/><rect x="15.1" y="7.6" width="4.4" height="2.4" fill="#6a6a6a"/><path d="M1 15.3H22.2" stroke="#707070" stroke-width="1.2" stroke-dasharray="1.6 0.9"/><path d="M18.3 5.7L22.2 15.9" stroke="#9a9a9a" stroke-width="1" stroke-dasharray="1 1"/></svg>
<svg style="position:absolute;left:408px;top:44px" width="21" height="22" viewBox="0 0 21 22"><rect x="1" y="1" width="18" height="19" fill="#ffffff" stroke="#303030" stroke-width="1.3"/><path d="M18.5 2V19.5H2" stroke="#707070" stroke-width="1" fill="none"/></svg>
<svg style="position:absolute;left:442px;top:46px" width="24" height="17" viewBox="0 0 24 17"><rect x="1" y="1.5" width="22" height="14" fill="#f6f6f6" stroke="#8c8c8c" stroke-width="1.8"/><path d="M2 2.5L12 10.5L22 2.5M2 14.5L9 8.5M22 14.5L15 8.5" stroke="#8c8c8c" stroke-width="1.2" fill="none"/></svg>
<svg style="position:absolute;left:478px;top:45px" width="24" height="20" viewBox="0 0 24 20"><path d="M0.8 0.8H3.2V4H5.8V0.8H8.5V5.2L6.5 7.2V12.3L8.5 14.3V19.2H5.8V16H3.2V19.2H0.8V14.3L2.6 12.3V7.2L0.8 5.2Z" fill="#109010" stroke="#003800" stroke-width="1.1"/><path d="M10.5 0.8H21L23.2 3V5.3H18.6V18.6H13.8V5.3H10.5Z" fill="#109010" stroke="#003800" stroke-width="1.1"/></svg>
<svg style="position:absolute;left:13px;top:544px" width="10" height="13" viewBox="0 0 10 13" shape-rendering="crispEdges"><rect x="1" y="0" width="2" height="12" fill="#101010"/><path d="M3 6L9 0V12Z" fill="#101010"/></svg>
<svg style="position:absolute;left:42px;top:544px" width="7" height="13" viewBox="0 0 7 13"><path d="M1 6L6 0.5V11.5Z" fill="#101010"/></svg>
<svg style="position:absolute;left:68px;top:544px" width="12" height="13" viewBox="0 0 12 13"><path d="M1 6L6 0.5V11.5Z M5 6L10 0.5V11.5Z" fill="#101010"/></svg>
<svg style="position:absolute;left:95px;top:543px" width="14" height="14" viewBox="0 0 14 14"><circle cx="7" cy="7" r="5.5" fill="none" stroke="#101010" stroke-width="1.8"/><circle cx="7" cy="7" r="3" fill="#101010"/></svg>
<svg style="position:absolute;left:125px;top:544px" width="12" height="13" viewBox="0 0 12 13"><path d="M11 6L6 0.5V11.5Z M6 6L1 0.5V11.5Z" fill="#101010"/></svg>
<svg style="position:absolute;left:156px;top:544px" width="7" height="13" viewBox="0 0 7 13"><path d="M6 6L1 0.5V11.5Z" fill="#101010"/></svg>
<svg style="position:absolute;left:182px;top:544px" width="10" height="13" viewBox="0 0 10 13" shape-rendering="crispEdges"><rect x="7" y="0" width="2" height="12" fill="#101010"/><path d="M7 6L1 0V12Z" fill="#101010"/></svg>
<svg style="position:absolute;left:206px;top:541px" width="19" height="19" viewBox="0 0 19 19"><path d="M5.5 0.5H13.5L18.5 5.5V13.5L13.5 18.5H5.5L0.5 13.5V5.5Z" fill="#f20c0c"/></svg>
<div style="position:absolute;left:1px;top:588px;width:48px;height:19px;background:#D2D1CA;border-top:1px solid #fff;border-left:1px solid #fff;border-right:1px solid #404040;border-bottom:1px solid #404040;box-shadow:inset -1px -1px 0 #808080;"></div>
<svg style="position:absolute;left:3px;top:589px" width="16" height="15" viewBox="0 0 16 15"><path d="M2.5 1.5Q5 0 8 1.5V6.5Q5 5 2 6.5Z" fill="#f07020"/><path d="M8.5 2.5Q11.5 1 14.5 2.5V8Q11.5 6.5 8.5 8Z" fill="#50c030"/><path d="M1 7Q4 5.5 7.5 7V12.5Q4 11 1 12.5Z" fill="#3060e0"/><path d="M8 8.5Q11 7 14 8.5V14Q11 12.5 8 14Z" fill="#f0c020"/></svg>
<div style="position:absolute;left:20.00px;top:597.02px;height:0;line-height:0;font-size:11.5px;white-space:pre;color:#000;font-weight:bold;letter-spacing:-0.051px;">Start</div>
<div style="position:absolute;left:53px;top:589px;width:1px;height:17px;background:#fff"></div>
<div style="position:absolute;left:54px;top:589px;width:1px;height:17px;background:#9a9a9a"></div>
<svg style="position:absolute;left:62px;top:590px" width="15" height="15" viewBox="0 0 15 15"><circle cx="7.5" cy="8" r="5.8" fill="#1f68c8"/><circle cx="7.5" cy="8" r="3" fill="#e8f4ff"/><rect x="4.5" y="7.3" width="6" height="1.6" fill="#1f68c8"/><path d="M8.5 9.5H14V12H8.5Z" fill="#1f68c8"/><path d="M1.2 13.5C2.5 6 9 1.5 14.2 1.2" stroke="#e8c040" stroke-width="1.5" fill="none"/></svg>
<svg style="position:absolute;left:81px;top:589px" width="17" height="17" viewBox="0 0 17 17"><circle cx="8.5" cy="8.5" r="7.4" fill="#f49a10" stroke="#7a5000" stroke-width="1"/><g fill="#c83800"><circle cx="5.5" cy="7" r="0.7"/><circle cx="8.5" cy="7" r="0.7"/><circle cx="11.5" cy="7" r="0.7"/><circle cx="5.5" cy="10" r="0.7"/><circle cx="8.5" cy="10" r="0.7"/><circle cx="11.5" cy="10" r="0.7"/><circle cx="8.5" cy="12.8" r="0.7"/></g></svg>
<svg style="position:absolute;left:102px;top:590px" width="15" height="15" viewBox="0 0 15 15"><rect x="2.5" y="0.5" width="12" height="12" fill="#e8f0e8" stroke="#70a070"/><rect x="0.5" y="2.5" width="12" height="12" fill="#ffffff" stroke="#408040"/><path d="M3.5 5.5L10 12.5M9.5 5.5L5 10" stroke="#107010" stroke-width="2"/></svg>
<div style="position:absolute;left:140.00px;top:592.50px;height:0;line-height:0;font-size:13px;white-space:pre;color:#000;font-weight:bold;">»</div>
<div style="position:absolute;left:153px;top:589px;width:1px;height:17px;background:#fff"></div>
<div style="position:absolute;left:154px;top:589px;width:1px;height:17px;background:#9a9a9a"></div>
<div style="position:absolute;left:157px;top:588px;width:116px;height:19px;background:#D2D1CA;border-top:1px solid #fff;border-left:1px solid #fff;border-right:1px solid #404040;border-bottom:1px solid #404040;box-shadow:inset -1px -1px 0 #808080;"></div>
<div style="position:absolute;left:275px;top:588px;width:115px;height:19px;background:#D2D1CA;border-top:1px solid #fff;border-left:1px solid #fff;border-right:1px solid #404040;border-bottom:1px solid #404040;box-shadow:inset -1px -1px 0 #808080;"></div>
<div style="position:absolute;left:393px;top:588px;width:114px;height:19px;background:#D2D1CA;border-top:1px solid #fff;border-left:1px solid #fff;border-right:1px solid #404040;border-bottom:1px solid #404040;box-shadow:inset -1px -1px 0 #808080;"></div>
<div style="position:absolute;left:510px;top:588px;width:115px;height:19px;background:#D2D1CA;border-top:1px solid #fff;border-left:1px solid #fff;border-right:1px solid #404040;border-bottom:1px solid #404040;box-shadow:inset -1px -1px 0 #808080;"></div>
<div style="position:absolute;left:627px;top:588px;width:114px;height:19px;background:#D2D1CA;border-top:1px solid #fff;border-left:1px solid #fff;border-right:1px solid #404040;border-bottom:1px solid #404040;box-shadow:inset -1px -1px 0 #808080;"></div>
<div style="position:absolute;left:744px;top:588px;width:115px;height:19px;background:#f0efeb;border-top:1px solid #404040;border-left:1px solid #404040;border-right:1px solid #fff;border-bottom:1px solid #fff;box-shadow:inset 1px 1px 0 #808080"></div>
<svg style="position:absolute;left:163px;top:590px" width="12" height="15" viewBox="0 0 12 15"><path d="M1 4Q3 0 6 3Q7 6 6 9L8 12L5 14Q3 11 4 7Q3 5 1 4Z" fill="#e01010" stroke="#700000" stroke-width="0.6"/><path d="M7 10L10.5 2" stroke="#200000" stroke-width="1.4"/></svg>
<div style="position:absolute;left:180.00px;top:597.19px;height:0;line-height:0;font-size:11px;white-space:pre;color:#1a1a1a;letter-spacing:-0.194px;-webkit-text-stroke:0.15px currentColor;">Vantive System -...</div>
<svg style="position:absolute;left:278px;top:589px" width="17" height="17" viewBox="0 0 17 17"><circle cx="8.5" cy="8.5" r="7.4" fill="#f49a10" stroke="#7a5000" stroke-width="1"/><g fill="#c83800"><circle cx="5.5" cy="7" r="0.7"/><circle cx="8.5" cy="7" r="0.7"/><circle cx="11.5" cy="7" r="0.7"/><circle cx="5.5" cy="10" r="0.7"/><circle cx="8.5" cy="10" r="0.7"/><circle cx="11.5" cy="10" r="0.7"/><circle cx="8.5" cy="12.8" r="0.7"/></g></svg>
<div style="position:absolute;left:297.00px;top:597.19px;height:0;line-height:0;font-size:11px;white-space:pre;color:#1a1a1a;letter-spacing:-0.279px;-webkit-text-stroke:0.15px currentColor;">Bulletin 41864 in ...</div>
<svg style="position:absolute;left:397px;top:590px" width="15" height="15" viewBox="0 0 15 15"><circle cx="7.5" cy="8" r="5.8" fill="#1f68c8"/><circle cx="7.5" cy="8" r="3" fill="#e8f4ff"/><rect x="4.5" y="7.3" width="6" height="1.6" fill="#1f68c8"/><path d="M8.5 9.5H14V12H8.5Z" fill="#1f68c8"/><path d="M1.2 13.5C2.5 6 9 1.5 14.2 1.2" stroke="#e8c040" stroke-width="1.5" fill="none"/></svg>
<div style="position:absolute;left:414.00px;top:597.19px;height:0;line-height:0;font-size:11px;white-space:pre;color:#1a1a1a;letter-spacing:-0.568px;-webkit-text-stroke:0.15px currentColor;">GM GlobalConnec...</div>
<svg style="position:absolute;left:513px;top:590px" width="16" height="14" viewBox="0 0 16 14"><rect x="0.5" y="0.5" width="15" height="13" fill="#ffffff" stroke="#3060c0"/><rect x="0.5" y="0.5" width="15" height="2.5" fill="#3060c0"/></svg>
<div style="position:absolute;left:531.00px;top:597.19px;height:0;line-height:0;font-size:11px;white-space:pre;color:#1a1a1a;letter-spacing:-0.281px;-webkit-text-stroke:0.15px currentColor;">Incoming Reques...</div>
<svg style="position:absolute;left:631px;top:590px" width="15" height="15" viewBox="0 0 15 15"><circle cx="7.5" cy="8" r="5.8" fill="#1f68c8"/><circle cx="7.5" cy="8" r="3" fill="#e8f4ff"/><rect x="4.5" y="7.3" width="6" height="1.6" fill="#1f68c8"/><path d="M8.5 9.5H14V12H8.5Z" fill="#1f68c8"/><path d="M1.2 13.5C2.5 6 9 1.5 14.2 1.2" stroke="#e8c040" stroke-width="1.5" fill="none"/></svg>
<div style="position:absolute;left:649.00px;top:597.19px;height:0;line-height:0;font-size:11px;white-space:pre;color:#1a1a1a;letter-spacing:-0.273px;-webkit-text-stroke:0.15px currentColor;">TIS - Windows In...</div>
<svg style="position:absolute;left:747px;top:589px" width="18" height="17" viewBox="0 0 18 17" shape-rendering="crispEdges"><rect x="1" y="2" width="17" height="15" fill="#8a9098"/><rect x="1" y="7" width="6" height="8" fill="#1a20d8"/><rect x="2" y="4" width="3" height="3" fill="#e8f0ff"/><rect x="4" y="2" width="3" height="6" fill="#70b0a0"/><rect x="7" y="2" width="10" height="14" fill="#a0a8b0"/><rect x="8" y="4" width="9" height="3" fill="#e02818"/><rect x="8" y="4" width="3" height="9" fill="#d84030"/><rect x="11" y="7" width="6" height="6" fill="#103828"/><rect x="14" y="4" width="3" height="4" fill="#400818"/><rect x="11" y="13" width="6" height="3" fill="#081010"/></svg>
<div style="position:absolute;left:767.00px;top:597.19px;height:0;line-height:0;font-size:11px;white-space:pre;color:#000;font-weight:bold;letter-spacing:-0.052px;">Snapshot Uplo...</div>
<div style="position:absolute;left:865px;top:588px;width:112px;height:20px;border-top:1px solid #808080;border-left:1px solid #808080;border-bottom:1px solid #fff"></div>
<div style="position:absolute;left:870.00px;top:596.53px;height:0;line-height:0;font-size:10px;white-space:pre;color:#000;font-weight:bold;">«</div>
<svg style="position:absolute;left:882px;top:590px" width="15" height="15" viewBox="0 0 15 15"><rect x="0" y="0" width="15" height="15" fill="#143c8c"/><circle cx="7.5" cy="7.5" r="5.5" fill="#3090c0"/><path d="M5 3L9 4L10 8L7 12L5 8Z" fill="#e09030"/></svg>
<svg style="position:absolute;left:899px;top:590px" width="16" height="15" viewBox="0 0 16 15"><path d="M6 1H14A2 2 0 0 1 15 4V7L12 9V7H7A2 2 0 0 1 5 5V3A2 2 0 0 1 6 1Z" fill="#e8f0ff" stroke="#4070c0"/><circle cx="5" cy="10" r="4.2" fill="#80b0f0" stroke="#2050a0"/><path d="M2.5 10H7.5" stroke="#fff" stroke-width="1.2"/></svg>
<div style="position:absolute;left:921.00px;top:598.19px;height:0;line-height:0;font-size:11px;white-space:pre;color:#101010;letter-spacing:-0.239px;-webkit-text-stroke:0.15px currentColor;">11:34 AM</div>
</body></html>
